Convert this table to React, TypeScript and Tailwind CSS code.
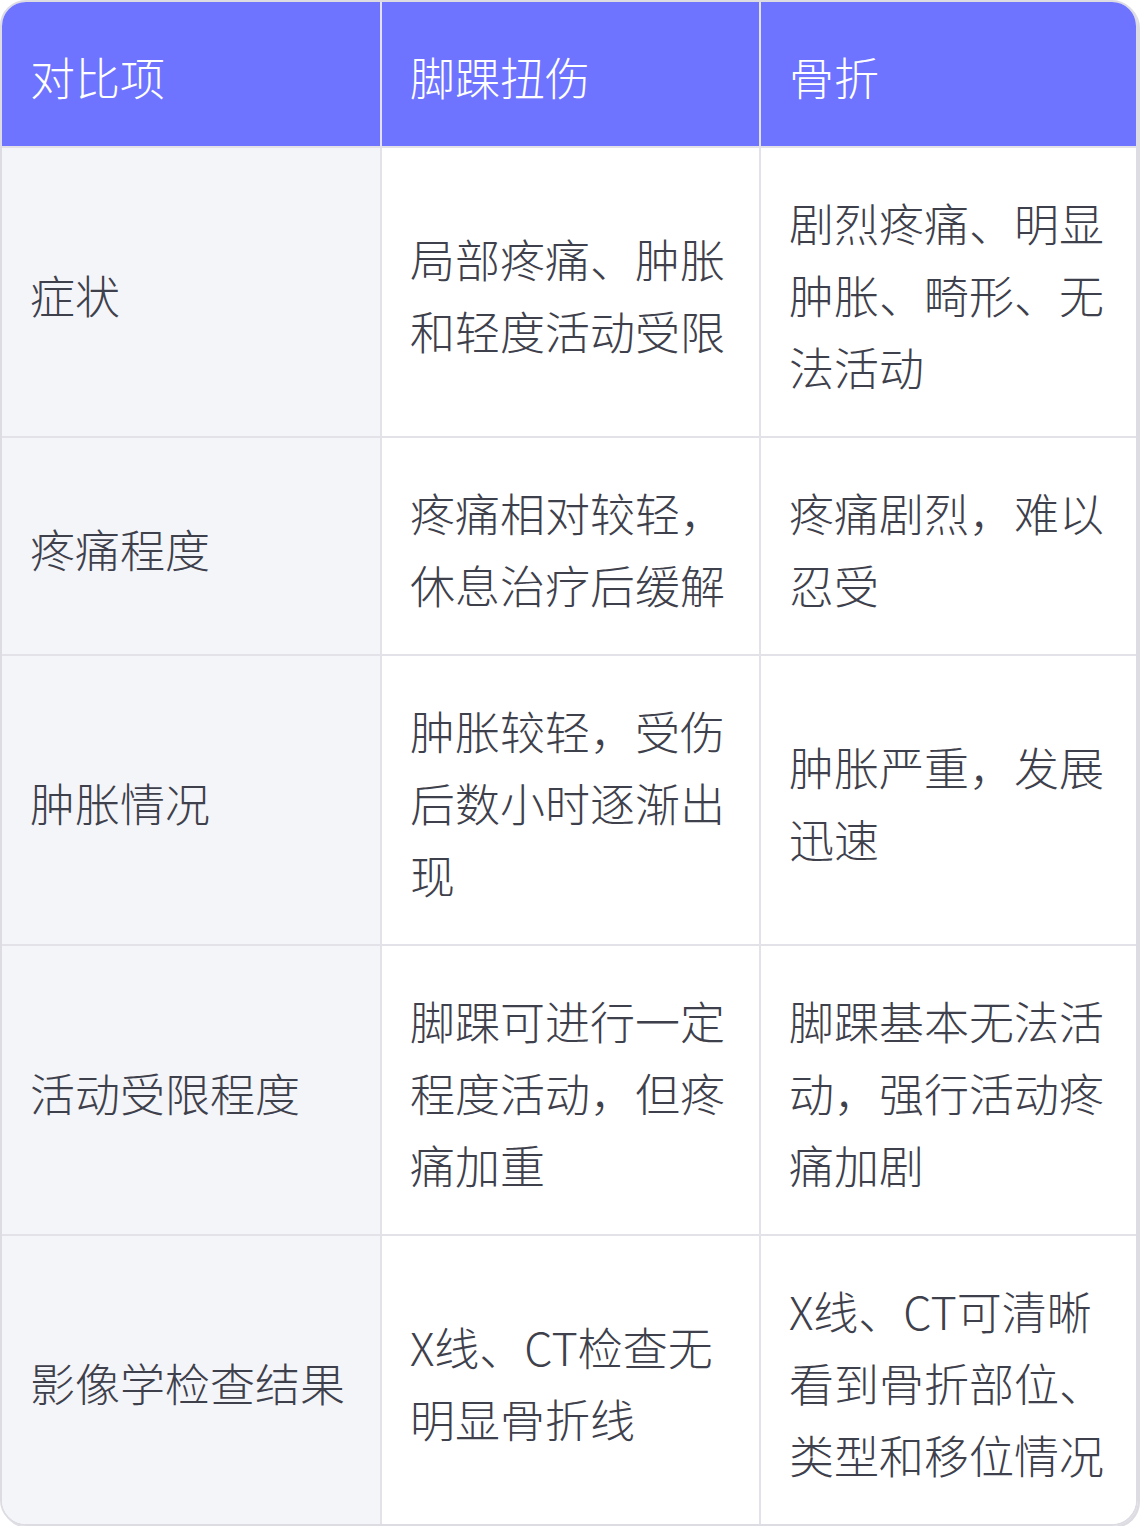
const headers = ['对比项', '脚踝扭伤', '骨折'];

const rows = [
  ['症状', '局部疼痛、肿胀和轻度活动受限', '剧烈疼痛、明显肿胀、畸形、无法活动'],
  ['疼痛程度', '疼痛相对较轻，休息治疗后缓解', '疼痛剧烈，难以忍受'],
  ['肿胀情况', '肿胀较轻，受伤后数小时逐渐出现', '肿胀严重，发展迅速'],
  ['活动受限程度', '脚踝可进行一定程度活动，但疼痛加重', '脚踝基本无法活动，强行活动疼痛加剧'],
  ['影像学检查结果', 'X线、CT检查无明显骨折线', 'X线、CT可清晰看到骨折部位、类型和移位情况'],
];

export default function App() {
  return (
    <div
      className="w-[1140px] bg-white"
      style={{ fontFamily: '"Noto Sans CJK SC", "Noto Sans", sans-serif' }}
    >
      <div className="w-[1138px] overflow-hidden rounded-[26px] border-2 border-[#dcdce2] shadow-[2px_2px_0_#dcdce2]">
        <div className="grid grid-cols-[380px_379px_1fr]">
          {headers.map((h, i) => (
            <div
              key={h}
              className={`bg-[#6e74ff] px-[28px] pt-[39px] pb-[33px] text-[45px] leading-[72px] font-light text-white border-b-2 border-[#e2e2e8] ${
                i < 2 ? 'border-r-2' : ''
              }`}
            >
              {h}
            </div>
          ))}
          {rows.map((r, ri) =>
            r.map((c, ci) => (
              <div
                key={`${ri}-${ci}`}
                className={`flex items-center px-[28px] pt-[39px] pb-[33px] text-[45px] leading-[72px] font-light text-[#3e404b] border-[#e2e2e8] ${
                  ci === 0 ? 'bg-[#f4f5f9]' : 'bg-white'
                } ${ci < 2 ? 'border-r-2' : ''} ${ri < rows.length - 1 ? 'border-b-2' : ''}`}
              >
                <span>{c}</span>
              </div>
            ))
          )}
        </div>
      </div>
    </div>
  );
}
